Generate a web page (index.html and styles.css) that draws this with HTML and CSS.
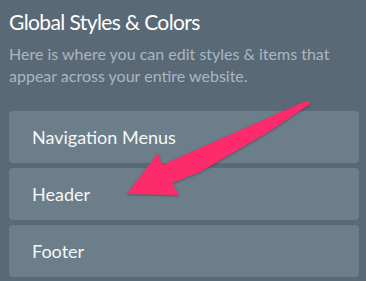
FILE: index.html
```html
<!DOCTYPE html>
<html lang="en">
<head>
  <meta charset="UTF-8" />
  <title>Global Styles &amp; Colors</title>
  <link rel="stylesheet" href="styles.css">
</head>
<body>
  <div class="painel">
    <h2>Global Styles &amp; Colors</h2>
    <p class="descricao">Here is where you can edit styles &amp; items that appear across your entire website.</p>

    <div class="lista">
      <a class="item" href="#">Navigation Menus</a>
      <a class="item" href="#">Header</a>
      <a class="item" href="#">Footer</a>
    </div>
  </div>

  <svg class="seta" width="366" height="281" viewBox="0 0 366 281">
    <path d="M127 194 L158 153 L162 165 L306 101 Q311 100 310 104 L270 131 L200 172 L172 183 L179 195 Z" fill="#fd2b6b"/>
  </svg>
</body>
</html>
```

FILE: styles.css
```css
* {
  box-sizing: border-box;
  margin: 0;
  padding: 0;
}

body {
  font-family: Lato, "Open Sans", sans-serif;
  background-color: #596a76;
  width: 366px;
  height: 281px;
  overflow: hidden;
  position: relative;
}

.painel {
  padding: 9px 7px 0 9px;
}

.painel h2 {
  color: #ffffff;
  font-size: 21px;
  font-weight: normal;
  letter-spacing: -0.6px;
  line-height: 26px;
}

.descricao {
  color: #aab7c2;
  font-size: 16px;
  line-height: 22px;
  margin-top: 8px;
}

.lista {
  display: flex;
  flex-direction: column;
  gap: 5px;
  margin-top: 24px;
}

.item {
  display: block;
  background-color: #6c7e8a;
  color: #f5f7f8;
  text-decoration: none;
  font-size: 18px;
  height: 52px;
  line-height: 52px;
  padding-left: 23px;
  border-radius: 4px;
}

/* seta por cima do conteudo */
.seta {
  position: absolute;
  left: 0;
  top: 0;
  filter: drop-shadow(0 1px 1px rgba(0, 0, 0, 0.3));
}
```
